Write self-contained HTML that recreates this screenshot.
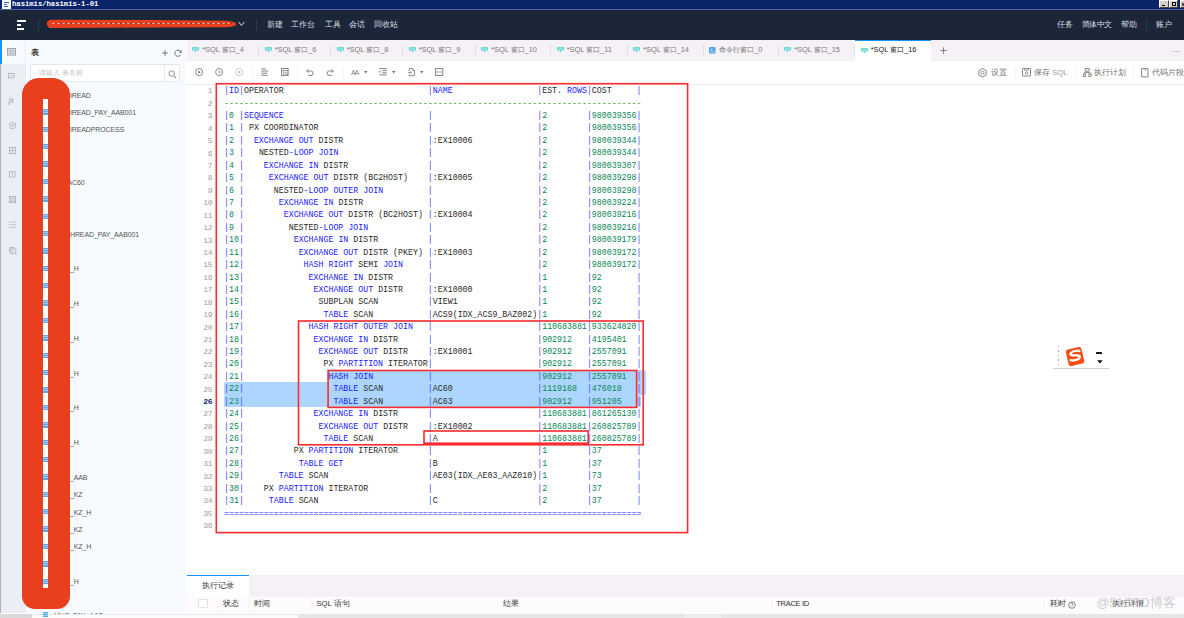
<!DOCTYPE html>
<html lang="zh">
<head>
<meta charset="utf-8">
<title>hasimis/hasimis-1-01</title>
<style>
*{box-sizing:border-box;margin:0;padding:0}
html,body{width:1184px;height:618px;overflow:hidden;background:#fff}
body{position:relative;font-family:"Liberation Sans",sans-serif;font-size:8px;color:#555;-webkit-font-smoothing:antialiased}
.abs{position:absolute}
/* title bar */
#tb{left:0;top:0;width:1184px;height:10px;background:#0a246a;border-bottom:1px solid #50649a}
#tb .t{left:12px;top:-1px;font:bold 7.2px/10px "Liberation Mono",monospace;color:#fff;letter-spacing:0;white-space:pre}
#tb .ic{left:2px;top:0;width:9px;height:9px;background:#fff}
.wb{top:0;width:9.4px;height:7.8px;background:#d4d0c8;border:1px solid;border-color:#fff #404040 #404040 #fff}
/* header */
#hd{left:0;top:10px;width:1184px;height:29.6px;background:#1b2738}
#hd .m{top:9.6px;font-size:7.8px;line-height:10px;color:#d9dde3;white-space:nowrap}
#hd .sep{top:9px;width:1px;height:12px;background:#2f3b4b}
/* left strip */
#ls{left:0;top:40px;width:25.7px;height:573px;background:#eceef6;border-left:1.4px solid #b2b2b6}
#ls .cursel{left:-1.4px;top:0;width:25.7px;height:24px;background:#f7faff;border-left:2px solid #1890ff}
/* left panel */
#lp{left:25.7px;top:40px;width:160.9px;height:573px;background:#f7faff}
.tt{position:absolute;left:70px;font-size:7px;line-height:12px;color:#555;white-space:nowrap;letter-spacing:-0.12px}
.ti{position:absolute;left:43.2px;width:5.3px;height:5.4px;background:repeating-linear-gradient(180deg,#5aa9f3 0 1.2px,#9dcdf9 1.2px 1.8px);z-index:6}
/* tabs */
#tabs{left:186.6px;top:40px;width:997.4px;height:21px;background:#f5f1f6}
.tab{top:0;height:21px;font-size:7.4px;line-height:21px;color:#7a7a7a;white-space:nowrap}
.tab .x{position:absolute;left:15.6px;top:-0.6px}
.tab .i{position:absolute;left:5.6px;top:7.4px;width:7px;height:5.5px}
.tab .s{position:absolute;right:0;top:5px;width:1px;height:11px;background:#e2dfe6}
.tab.act{background:#fff;color:#222;border-top:1.5px solid #1890ff}
/* toolbar */
#tool{left:186px;top:61px;width:998px;height:23.5px;background:#fff;border-bottom:1px solid #ececec}
.tsep{top:6px;width:1px;height:11px;background:#f3f3f3}
.rt{top:6.5px;font-size:7.6px;line-height:10px;color:#747474;white-space:nowrap}
/* editor */
#ed{left:186px;top:84.5px;width:998px;height:490.5px;background:#fff}
.ln{position:absolute;left:186px;width:26.1px;height:12.42px;text-align:right;font:8px/12.42px "Liberation Mono",monospace;letter-spacing:-0.35px;color:#9c9c9c}
.ln.cur{color:#0b216f;font-weight:bold}
.cl{position:absolute;left:224.1px;height:12.42px;font:8.282px/12.42px "Liberation Mono",monospace;color:#2a2a2a;white-space:pre;z-index:3}
.cl span{position:absolute;top:0}
.cl .k{color:#1a1aff}
.cl .p{color:#4646ff}
.cl .n{color:#098658}
.cl .c{color:#2e9a2e}
.sel{position:absolute;background:#add6ff;z-index:2;border-radius:1.5px}
.rb{position:absolute;border:2.1px solid #fb262b;z-index:5}
/* bottom */
#bt{left:186.6px;top:574.5px;width:998px;height:22px;background:#f5f1f6}
#bt .t{left:0;top:0;width:62.5px;height:22px;background:#fff;border-top:1.3px solid #1890ff;font-size:7.7px;line-height:19px;color:#444;text-align:center}
#bh{left:186px;top:596.5px;width:998px;height:17px;background:#fdfbfd}
#bh .h{top:2.4px;font-size:7.6px;line-height:10px;color:#333;white-space:nowrap}
#bh .cs{top:0;width:1px;height:17px;background:#f7f5f8}
#sb{left:0;top:613.5px;width:1184px;height:4.5px;background:#e6e5e8}
svg{position:absolute;overflow:visible}
</style>
</head>
<body>
<!-- ===== window title bar ===== -->
<div id="tb" class="abs">
  <div class="ic abs"><div class="abs" style="left:2px;top:1.5px;width:5px;height:1.2px;background:#2b6fd6"></div><div class="abs" style="left:1.5px;top:4px;width:3px;height:1.2px;background:#2b6fd6"></div><div class="abs" style="left:1.5px;top:6.2px;width:4px;height:1.2px;background:#35507a"></div></div>
  <div class="t abs"><span style="position:absolute;left:0.00px;top:0">hasi</span><span style="position:absolute;left:17.28px;top:0">mis/</span><span style="position:absolute;left:34.56px;top:0">hasi</span><span style="position:absolute;left:51.84px;top:0">mis-</span><span style="position:absolute;left:69.12px;top:0">1-01</span></div>
  <div class="wb abs" style="left:1159.2px"><div class="abs" style="left:1.5px;top:3.5px;width:3px;height:1.2px;background:#000"></div></div>
  <div class="wb abs" style="left:1169px"><div class="abs" style="left:1.5px;top:1px;width:4px;height:3.5px;border:1px solid #000;border-top-width:1.5px"></div></div>
  <div class="wb abs" style="left:1179.6px"><div class="abs" style="left:1px;top:0px;font:bold 6px/6px 'Liberation Sans',sans-serif;color:#000">x</div></div>
</div>

<!-- ===== dark app header ===== -->
<div id="hd" class="abs">
  <div class="abs" style="left:16.5px;top:10px;width:9.5px;height:2.4px;background:#fff"></div>
  <div class="abs" style="left:16.5px;top:14px;width:4.8px;height:2.2px;background:#fff"></div>
  <div class="abs" style="left:16.5px;top:17.6px;width:7.3px;height:2.4px;background:#fff"></div>
  <div class="sep abs" style="left:37.5px"></div>
  <div class="abs" style="left:49px;top:17px;width:7px;height:1px;background:#8d96a3"></div>
  <div class="sep abs" style="left:127px;top:12px;height:8px;opacity:.6"></div>
  <!-- red scribble over the connection name -->
  <svg style="left:0;top:-10px" width="260" height="40" viewBox="0 0 260 40"><path d="M46.8 23.8C46.8 21 49 19.7 52 19.7L150 20.1L226 20.7C232 20.9 236 22.6 236.6 24C236 25.7 232 27.1 226 27.2L150 27.6L52 27.9C49 27.9 46.8 26.6 46.8 23.8Z" fill="#e8401f"/></svg>
  <div class="abs" style="left:52px;top:13.3px;width:180px;height:1px;background:repeating-linear-gradient(90deg,#d9c2bd 0 3px,#6b2a1e 3px 5px);opacity:.75"></div>
  <svg style="left:237.6px;top:11.3px" width="7" height="6" viewBox="0 0 7 6"><path d="M0.6 1 L3.5 4.4 L6.4 1" fill="none" stroke="#dfe3e8" stroke-width="1"/></svg>
  <div class="sep abs" style="left:255.9px"></div>
  <div class="m abs" style="left:266.8px">新建</div>
  <div class="m abs" style="left:291.2px">工作台</div>
  <div class="m abs" style="left:324.6px">工具</div>
  <div class="m abs" style="left:349.4px">会话</div>
  <div class="m abs" style="left:373.8px">回收站</div>
  <div class="m abs" style="left:1057px">任务</div>
  <div class="m abs" style="left:1081.5px;letter-spacing:-0.5px">简体中文</div>
  <div class="m abs" style="left:1121px">帮助</div>
  <div class="sep abs" style="left:1146px"></div>
  <div class="m abs" style="left:1156px">账户</div>
</div>

<!-- ===== left icon strip ===== -->
<div id="ls" class="abs">
  <div class="cursel abs"></div>
</div>
<svg style="left:6.9px;top:47.9px" width="9" height="8" viewBox="0 0 9 8"><rect x=".5" y=".5" width="8" height="6.6" fill="none" stroke="#9a9ea6" stroke-width=".9"/><path d="M.5 2.15H8.5M.5 3.8H8.5M.5 5.45H8.5M3.2 .5V7.1M5.8 .5V7.1" stroke="#9a9ea6" stroke-width=".6"/></svg>
<svg style="left:8.46px;top:72.68px" width="6.89" height="6.13" viewBox="0 0 9 8"><rect x=".5" y=".8" width="7.5" height="5.6" fill="none" stroke="#a3a7af" stroke-width=".9"/><path d="M2.2 5 L4 3.4 L5.3 4.4 L7 2.6" fill="none" stroke="#a3a7af" stroke-width=".8"/></svg>
<div class="abs" style="left:8.5px;top:96px;font:italic 7.5px/10px 'Liberation Serif',serif;color:#8a8f99">fx</div>
<svg style="left:8.52px;top:122.42px" width="7.56" height="7.56" viewBox="0 0 9 9"><ellipse cx="4.3" cy="2" rx="3.4" ry="1.3" fill="none" stroke="#a3a7af" stroke-width=".8"/><path d="M.9 2V6.6C.9 8.2 7.7 8.2 7.7 6.6V2M2.6 5.2H6" fill="none" stroke="#a3a7af" stroke-width=".8"/></svg>
<svg style="left:8.52px;top:147.42px" width="7.56" height="7.56" viewBox="0 0 9 9"><rect x=".6" y=".6" width="7.4" height="7.2" fill="none" stroke="#a3a7af" stroke-width=".9"/><path d="M.6 4.2H8M4.3 .6V7.8" stroke="#a3a7af" stroke-width=".8"/></svg>
<svg style="left:8.94px;top:171.34px" width="6.72" height="6.72" viewBox="0 0 8 8"><rect x=".6" y=".6" width="6.6" height="6.6" fill="none" stroke="#a9adb4" stroke-width=".9"/><path d="M3 2.2H5M4 2.2V5.6" stroke="#a9adb4" stroke-width=".8" fill="none"/></svg>
<svg style="left:8.52px;top:196.42px" width="7.56" height="7.56" viewBox="0 0 9 9"><rect x=".6" y=".6" width="7.4" height="7.4" fill="none" stroke="#a3a7af" stroke-width=".9"/><path d="M.6 .6L8 8M8 .6L.6 8" stroke="#a3a7af" stroke-width=".7"/><rect x="2.6" y="2.6" width="3.4" height="3.4" fill="#eceef6" stroke="#a3a7af" stroke-width=".7"/></svg>
<svg style="left:7.60px;top:221.42px" width="8.40" height="7.56" viewBox="0 0 10 9"><path d="M2.8 1.2H9.5M2.8 4.4H9.5M2.8 7.6H9.5" stroke="#aeb2b9" stroke-width=".9"/><path d="M.3 1.2H1.5M.3 4.4H1.5M.3 7.6H1.5" stroke="#aeb2b9" stroke-width="1"/></svg>
<svg style="left:8.52px;top:246.92px" width="7.56" height="7.56" viewBox="0 0 9 9"><rect x="2.2" y="2.2" width="6" height="5.8" fill="none" stroke="#a3a7af" stroke-width=".9"/><path d="M.6 6V.6H6.2" fill="none" stroke="#a3a7af" stroke-width=".9"/><path d="M4.3 4L6 5.1L4.3 6.2Z" fill="#a3a7af"/></svg>

<!-- ===== left object panel ===== -->
<div id="lp" class="abs"></div>
<div class="abs" style="left:31px;top:46.5px;font-size:8px;line-height:11px;font-weight:bold;color:#333">表</div>
<svg style="left:162.3px;top:49.5px" width="6" height="6" viewBox="0 0 6 6"><path d="M3 .2V5.8M.2 3H5.8" stroke="#666" stroke-width=".85"/></svg>
<svg style="left:174px;top:48.7px" width="8" height="8" viewBox="0 0 8 8"><path d="M6.9 3.3A3.1 3.1 0 1 0 6.7 5.6" fill="none" stroke="#666" stroke-width=".9"/><path d="M7.3 1.2V3.4H5.2" fill="none" stroke="#666" stroke-width=".8"/></svg>
<div class="abs" style="left:30.2px;top:64.2px;width:150.3px;height:18.3px;background:#fff;border:1px solid #e4e6ea;border-radius:1.5px"></div>
<div class="abs" style="left:163.5px;top:65px;width:1px;height:17px;background:#e9ebee"></div>
<div class="abs" style="left:38.8px;top:68.4px;font-size:7.1px;line-height:10px;color:#c3c5c9;white-space:nowrap">请输入 表名称</div>
<svg style="left:168px;top:69.5px" width="9" height="9" viewBox="0 0 9 9"><circle cx="3.6" cy="3.6" r="2.7" fill="none" stroke="#8c8c8c" stroke-width=".95"/><path d="M5.6 5.6L8.2 8.2" stroke="#8c8c8c" stroke-width="1.05"/></svg>
<div class="tt" style="top:89.60px;left:70.0px">IREAD</div>
<div class="ti" style="top:109.28px"></div><div class="tt" style="top:106.98px;left:70.0px">IREAD_PAY_AAB001</div>
<div class="ti" style="top:126.66px"></div><div class="tt" style="top:124.36px;left:70.0px">IREADPROCESS</div>
<div class="ti" style="top:144.04px"></div>
<div class="ti" style="top:161.42px"></div><div class="tt" style="top:159.12px;left:64.8px">A</div>
<div class="ti" style="top:178.80px"></div><div class="tt" style="top:176.50px;left:67.6px">AC60</div>
<div class="ti" style="top:196.18px"></div><div class="tt" style="top:193.88px;left:64.8px">F</div>
<div class="ti" style="top:213.56px"></div><div class="tt" style="top:211.26px;left:64.8px">H</div>
<div class="ti" style="top:230.94px"></div><div class="tt" style="top:228.64px;left:70.0px">HREAD_PAY_AAB001</div>
<div class="ti" style="top:248.32px"></div><div class="tt" style="top:246.02px;left:64.8px">I</div>
<div class="ti" style="top:265.70px"></div><div class="tt" style="top:263.40px;left:70.0px">_H</div>
<div class="ti" style="top:283.08px"></div>
<div class="ti" style="top:300.46px"></div><div class="tt" style="top:298.16px;left:70.0px">_H</div>
<div class="ti" style="top:317.84px"></div><div class="tt" style="top:315.54px;left:64.8px">I</div>
<div class="ti" style="top:335.22px"></div><div class="tt" style="top:332.92px;left:70.0px">_H</div>
<div class="ti" style="top:352.60px"></div><div class="tt" style="top:350.30px;left:64.8px">I</div>
<div class="ti" style="top:369.98px"></div><div class="tt" style="top:367.68px;left:70.0px">_H</div>
<div class="ti" style="top:387.36px"></div><div class="tt" style="top:385.06px;left:64.8px">I</div>
<div class="ti" style="top:404.74px"></div><div class="tt" style="top:402.44px;left:70.0px">_H</div>
<div class="ti" style="top:422.12px"></div><div class="tt" style="top:419.82px;left:64.8px">I</div>
<div class="ti" style="top:439.50px"></div><div class="tt" style="top:437.20px;left:70.0px">_H</div>
<div class="ti" style="top:456.88px"></div>
<div class="ti" style="top:474.26px"></div><div class="tt" style="top:471.96px;left:70.0px">_AAB</div>
<div class="ti" style="top:491.64px"></div><div class="tt" style="top:489.34px;left:70.0px">_KZ</div>
<div class="ti" style="top:509.02px"></div><div class="tt" style="top:506.72px;left:70.0px">_KZ_H</div>
<div class="ti" style="top:526.40px"></div><div class="tt" style="top:524.10px;left:70.0px">_KZ</div>
<div class="ti" style="top:543.78px"></div><div class="tt" style="top:541.48px;left:70.0px">_KZ_H</div>
<div class="ti" style="top:561.16px"></div><div class="tt" style="top:558.86px;left:64.8px">I</div>
<div class="ti" style="top:578.54px"></div><div class="tt" style="top:576.24px;left:70.0px">_H</div>

<div class="ti" style="top:612px"></div><div class="tt" style="top:609.7px;left:54px">MHS_PAY_AAB</div>

<!-- big red redaction blob -->
<div class="abs" style="left:21.6px;top:77.6px;width:48px;height:531px;border-radius:17px 18px 13px 13px/17px 16px 13px 13px;background:#e8401f;z-index:5"></div>
<div class="abs" style="left:43px;top:99px;width:5.2px;height:488.5px;background:#fff;z-index:5"></div>

<!-- ===== tab bar ===== -->
<div id="tabs" class="abs">
  <div class="tab abs" style="left:0.0px;width:72.5px"><svg class="i" viewBox="0 0 7 5.5"><rect x="0" y="0" width="7" height="3.6" rx=".5" fill="#63d8d2"/><path d="M1.2 1.2H5.8M1.2 2.4H5.8" stroke="#c9f3f0" stroke-width=".5"/><path d="M2.4 3.6H4.6L4 5.3H3Z" fill="#63d8d2"/></svg><span class="x">*SQL 窗口_4</span><div class="s"></div></div>
  <div class="tab abs" style="left:72.5px;width:72.0px"><svg class="i" viewBox="0 0 7 5.5"><rect x="0" y="0" width="7" height="3.6" rx=".5" fill="#63d8d2"/><path d="M1.2 1.2H5.8M1.2 2.4H5.8" stroke="#c9f3f0" stroke-width=".5"/><path d="M2.4 3.6H4.6L4 5.3H3Z" fill="#63d8d2"/></svg><span class="x">*SQL 窗口_6</span><div class="s"></div></div>
  <div class="tab abs" style="left:144.5px;width:72.0px"><svg class="i" viewBox="0 0 7 5.5"><rect x="0" y="0" width="7" height="3.6" rx=".5" fill="#63d8d2"/><path d="M1.2 1.2H5.8M1.2 2.4H5.8" stroke="#c9f3f0" stroke-width=".5"/><path d="M2.4 3.6H4.6L4 5.3H3Z" fill="#63d8d2"/></svg><span class="x">*SQL 窗口_8</span><div class="s"></div></div>
  <div class="tab abs" style="left:216.5px;width:72.5px"><svg class="i" viewBox="0 0 7 5.5"><rect x="0" y="0" width="7" height="3.6" rx=".5" fill="#63d8d2"/><path d="M1.2 1.2H5.8M1.2 2.4H5.8" stroke="#c9f3f0" stroke-width=".5"/><path d="M2.4 3.6H4.6L4 5.3H3Z" fill="#63d8d2"/></svg><span class="x">*SQL 窗口_9</span><div class="s"></div></div>
  <div class="tab abs" style="left:289.0px;width:75.5px"><svg class="i" viewBox="0 0 7 5.5"><rect x="0" y="0" width="7" height="3.6" rx=".5" fill="#63d8d2"/><path d="M1.2 1.2H5.8M1.2 2.4H5.8" stroke="#c9f3f0" stroke-width=".5"/><path d="M2.4 3.6H4.6L4 5.3H3Z" fill="#63d8d2"/></svg><span class="x">*SQL 窗口_10</span><div class="s"></div></div>
  <div class="tab abs" style="left:364.5px;width:76.5px"><svg class="i" viewBox="0 0 7 5.5"><rect x="0" y="0" width="7" height="3.6" rx=".5" fill="#63d8d2"/><path d="M1.2 1.2H5.8M1.2 2.4H5.8" stroke="#c9f3f0" stroke-width=".5"/><path d="M2.4 3.6H4.6L4 5.3H3Z" fill="#63d8d2"/></svg><span class="x">*SQL 窗口_11</span><div class="s"></div></div>
  <div class="tab abs" style="left:441.0px;width:76.0px"><svg class="i" viewBox="0 0 7 5.5"><rect x="0" y="0" width="7" height="3.6" rx=".5" fill="#63d8d2"/><path d="M1.2 1.2H5.8M1.2 2.4H5.8" stroke="#c9f3f0" stroke-width=".5"/><path d="M2.4 3.6H4.6L4 5.3H3Z" fill="#63d8d2"/></svg><span class="x">*SQL 窗口_14</span><div class="s"></div></div>
  <div class="tab abs" style="left:517.0px;width:75.0px"><svg class="i" style="width:6.5px;height:6.5px;top:7px" viewBox="0 0 6.5 6.5"><rect x="0" y="0" width="6.5" height="6.5" rx=".8" fill="#5aa5f2"/><path d="M1.6 1.8L3.2 3.2L1.6 4.6M3.6 4.8H5" fill="none" stroke="#fff" stroke-width=".7"/></svg><span class="x">命令行窗口_0</span><div class="s"></div></div>
  <div class="tab abs" style="left:592.0px;width:76.5px"><svg class="i" viewBox="0 0 7 5.5"><rect x="0" y="0" width="7" height="3.6" rx=".5" fill="#63d8d2"/><path d="M1.2 1.2H5.8M1.2 2.4H5.8" stroke="#c9f3f0" stroke-width=".5"/><path d="M2.4 3.6H4.6L4 5.3H3Z" fill="#63d8d2"/></svg><span class="x">*SQL 窗口_15</span><div class="s"></div></div>
  <div class="tab abs act" style="left:668.5px;width:76.0px"><svg class="i" viewBox="0 0 7 5.5"><rect x="0" y="0" width="7" height="3.6" rx=".5" fill="#63d8d2"/><path d="M1.2 1.2H5.8M1.2 2.4H5.8" stroke="#c9f3f0" stroke-width=".5"/><path d="M2.4 3.6H4.6L4 5.3H3Z" fill="#63d8d2"/></svg><span class="x" style="top:-2.1px">*SQL 窗口_16</span></div>

  <svg style="left:753px;top:6.7px" width="7" height="7" viewBox="0 0 7 7"><path d="M3.5 .3V6.7M.3 3.5H6.7" stroke="#666" stroke-width=".8"/></svg>
  <div class="abs" style="left:986.4px;top:10.8px;width:1.3px;height:1.3px;background:#999;box-shadow:2.6px 0 #999,5.2px 0 #999"></div>
</div>

<!-- ===== editor toolbar ===== -->
<div id="tool" class="abs">
  <!-- run -->
  <svg style="left:9.36px;top:6.96px" width="8.28" height="8.28" viewBox="0 0 9 9"><circle cx="4.5" cy="4.5" r="3.9" fill="none" stroke="#707070" stroke-width=".9"/><path d="M3.5 2.8L6.3 4.5L3.5 6.2Z" fill="#707070"/></svg>
  <svg style="left:28.86px;top:6.96px" width="8.28" height="8.28" viewBox="0 0 9 9"><circle cx="4.5" cy="4.5" r="3.9" fill="none" stroke="#7a7a7a" stroke-width=".9"/><path d="M3.7 2.9L6.1 4.5L3.7 6.1" fill="none" stroke="#7a7a7a" stroke-width=".8"/></svg>
  <svg style="left:48.86px;top:6.96px" width="8.28" height="8.28" viewBox="0 0 9 9"><circle cx="4.5" cy="4.5" r="3.9" fill="none" stroke="#c4c4c4" stroke-width=".9"/><rect x="3.3" y="3.3" width="2.4" height="2.4" fill="#c4c4c4"/></svg>
  <div class="tsep abs" style="left:65.5px"></div>
  <svg style="left:74.86px;top:7.06px" width="8.28" height="8.28" viewBox="0 0 9 9"><path d="M.3 1H5.6M.3 3.3H8M.3 5.6H6.6M.3 7.9H7.6" stroke="#7a7a7a" stroke-width="1"/></svg>
  <svg style="left:94.86px;top:7.06px" width="8.28" height="8.28" viewBox="0 0 9 9"><rect x=".5" y=".5" width="7.2" height="7.6" fill="none" stroke="#7a7a7a" stroke-width=".95"/><path d="M.5 2.8H7.7M2.9 2.8V8" stroke="#7a7a7a" stroke-width=".8"/><circle cx="5.6" cy="5.8" r="1.3" fill="#fff" stroke="#7a7a7a" stroke-width=".7"/><path d="M6.6 6.8L7.8 8" stroke="#7a7a7a" stroke-width=".8"/></svg>
  <div class="tsep abs" style="left:111px"></div>
  <svg style="left:119.86px;top:7.72px" width="8.28" height="7.36" viewBox="0 0 9 8"><path d="M2.6 .4L.8 2.2L2.6 4M.8 2.2H5.3A2.4 2.4 0 0 1 5.3 7H2.2" fill="none" stroke="#707070" stroke-width=".95"/></svg>
  <svg style="left:139.86px;top:7.72px" width="8.28" height="7.36" viewBox="0 0 9 8"><path d="M6.2 .4L8 2.2L6.2 4M8 2.2H3.6A2.4 2.4 0 0 0 3.6 7H6.6" fill="none" stroke="#707070" stroke-width=".95"/></svg>
  <div class="tsep abs" style="left:156.5px"></div>
  <div class="abs" style="left:165px;top:6.6px;font-size:7px;line-height:10px;color:#808080;letter-spacing:-1.1px">AA</div>
  <svg style="left:177.50px;top:9.90px" width="3.4" height="2.4" viewBox="0 0 3.4 2.4"><path d="M0 0H3.4L1.7 2.4Z" fill="#707070"/></svg>
  <svg style="left:192.86px;top:7.22px" width="8.28" height="7.36" viewBox="0 0 9 8"><path d="M.3 .6H8.5M3.4 2.9H8.5M3.4 5.2H8.5M.3 7.5H8.5" stroke="#7a7a7a" stroke-width="1"/><path d="M.3 2.7L2.1 4.05L.3 5.4Z" fill="#7a7a7a"/></svg>
  <svg style="left:205.50px;top:9.90px" width="3.4" height="2.4" viewBox="0 0 3.4 2.4"><path d="M0 0H3.4L1.7 2.4Z" fill="#707070"/></svg>
  <svg style="left:221.82px;top:6.76px" width="7.36" height="8.28" viewBox="0 0 8 9"><path d="M1.2 3.4V.6H5L7.2 2.8V8.4H1.2V6.6" fill="none" stroke="#7a7a7a" stroke-width=".9"/><path d="M4.8 .6V3H7.2" fill="none" stroke="#7a7a7a" stroke-width=".7"/><path d="M0 5H3.8M2.6 3.8L3.8 5L2.6 6.2" fill="none" stroke="#7a7a7a" stroke-width=".8"/></svg>
  <svg style="left:233.50px;top:9.90px" width="3.4" height="2.4" viewBox="0 0 3.4 2.4"><path d="M0 0H3.4L1.7 2.4Z" fill="#707070"/></svg>
  <svg style="left:249.36px;top:6.96px" width="8.28" height="8.28" viewBox="0 0 9 9"><rect x=".5" y=".5" width="8" height="7.6" fill="none" stroke="#7a7a7a" stroke-width=".95"/><path d="M2.4 3V5.8M3.8 4.4H5.4M6.6 3V5.8" stroke="#7a7a7a" stroke-width=".8"/></svg>
  <!-- right actions -->
  <svg style="left:792px;top:7px" width="9" height="9.5" viewBox="0 0 9 9.5"><path d="M4.5 .5L8.1 2.6V6.9L4.5 9L.9 6.9V2.6Z" fill="none" stroke="#777" stroke-width=".9"/><circle cx="4.5" cy="4.75" r="1.5" fill="none" stroke="#777" stroke-width=".8"/></svg>
  <div class="rt abs" style="left:804.5px">设置</div>
  <div class="tsep abs" style="left:828.5px"></div>
  <svg style="left:836px;top:7.3px" width="9" height="8.5" viewBox="0 0 9 8.5"><rect x=".5" y=".5" width="8" height="7.5" rx=".6" fill="none" stroke="#777" stroke-width=".9"/><path d="M2.6 .5V2.4H6.2V.5" fill="none" stroke="#777" stroke-width=".7"/><circle cx="4.5" cy="5.1" r="1.2" fill="none" stroke="#777" stroke-width=".7"/></svg>
  <div class="rt abs" style="left:848.2px">保存 <span style="color:#9a9a9a">SQL</span></div>
  <div class="tsep abs" style="left:888.5px"></div>
  <svg style="left:897px;top:7.3px" width="8.5" height="9" viewBox="0 0 8.5 9"><rect x="2.2" y=".5" width="4" height="2.6" fill="none" stroke="#777" stroke-width=".8"/><path d="M4.2 3.1V4.6M1.4 6V4.6H7V6" fill="none" stroke="#777" stroke-width=".8"/><rect x=".3" y="6" width="2.4" height="2.4" fill="none" stroke="#777" stroke-width=".8"/><rect x="5.8" y="6" width="2.4" height="2.4" fill="none" stroke="#777" stroke-width=".8"/></svg>
  <div class="rt abs" style="left:907.7px">执行计划</div>
  <div class="tsep abs" style="left:946.5px"></div>
  <svg style="left:955px;top:7px" width="8" height="9.5" viewBox="0 0 8 9.5"><path d="M.6 .6H7V8.9H.6Z" fill="none" stroke="#777" stroke-width=".9"/><path d="M4.4 .6V2.8" stroke="#777" stroke-width=".8"/></svg>
  <div class="rt abs" style="left:966.2px">代码片段</div>

</div>

<!-- ===== editor ===== -->
<div id="ed" class="abs"></div>
<div class="sel" style="left:328.2px;top:369.9px;width:317.4px;height:13px"></div>
<div class="sel" style="left:224.3px;top:382.3px;width:421.3px;height:13px"></div>
<div class="sel" style="left:224.3px;top:394.7px;width:416.4px;height:12.5px"></div>
<div class="ln" style="top:85.45px">1</div><div class="cl" style="top:85.15px"><span class="p" style="left:0.00px">|</span><span class="k" style="left:4.97px">ID</span><span class="p" style="left:14.91px">|</span><span style="left:19.88px">OPERATOR</span><span class="p" style="left:203.77px">|</span><span class="k" style="left:208.74px">NAME</span><span class="p" style="left:313.11px">|</span><span style="left:318.08px">EST</span><span style="left:332.99px">.</span><span class="k" style="left:342.93px">ROWS</span><span class="p" style="left:362.81px">|</span><span style="left:367.78px">COST</span><span class="p" style="left:412.51px">|</span></div>
<div class="ln" style="top:97.87px">2</div><div class="cl" style="top:97.57px"><span class="c" style="left:0.00px">------------</span><span class="c" style="left:59.64px">------------</span><span class="c" style="left:119.28px">------------</span><span class="c" style="left:178.92px">------------</span><span class="c" style="left:238.56px">------------</span><span class="c" style="left:298.20px">------------</span><span class="c" style="left:357.84px">------------</span></div>
<div class="ln" style="top:110.30px">3</div><div class="cl" style="top:110.00px"><span class="p" style="left:0.00px">|</span><span class="n" style="left:4.97px">0</span><span class="p" style="left:14.91px">|</span><span class="k" style="left:19.88px">SEQUENCE</span><span class="p" style="left:203.77px">|</span><span class="p" style="left:313.11px">|</span><span class="n" style="left:318.08px">2</span><span class="p" style="left:362.81px">|</span><span class="n" style="left:367.78px">980039356</span><span class="p" style="left:412.51px">|</span></div>
<div class="ln" style="top:122.72px">4</div><div class="cl" style="top:122.42px"><span class="p" style="left:0.00px">|</span><span class="n" style="left:4.97px">1</span><span class="p" style="left:14.91px">|</span><span style="left:24.85px">PX</span><span style="left:39.76px">COORDINATOR</span><span class="p" style="left:203.77px">|</span><span class="p" style="left:313.11px">|</span><span class="n" style="left:318.08px">2</span><span class="p" style="left:362.81px">|</span><span class="n" style="left:367.78px">980039356</span><span class="p" style="left:412.51px">|</span></div>
<div class="ln" style="top:135.15px">5</div><div class="cl" style="top:134.85px"><span class="p" style="left:0.00px">|</span><span class="n" style="left:4.97px">2</span><span class="p" style="left:14.91px">|</span><span class="k" style="left:29.82px">EXCHANGE</span><span class="k" style="left:74.55px">OUT</span><span style="left:94.43px">DISTR</span><span class="p" style="left:203.77px">|</span><span style="left:208.74px">:</span><span style="left:213.71px">EX10006</span><span class="p" style="left:313.11px">|</span><span class="n" style="left:318.08px">2</span><span class="p" style="left:362.81px">|</span><span class="n" style="left:367.78px">980039344</span><span class="p" style="left:412.51px">|</span></div>
<div class="ln" style="top:147.57px">6</div><div class="cl" style="top:147.27px"><span class="p" style="left:0.00px">|</span><span class="n" style="left:4.97px">3</span><span class="p" style="left:14.91px">|</span><span style="left:34.79px">NESTED</span><span class="k" style="left:64.61px">-</span><span class="k" style="left:69.58px">LOOP</span><span class="k" style="left:94.43px">JOIN</span><span class="p" style="left:203.77px">|</span><span class="p" style="left:313.11px">|</span><span class="n" style="left:318.08px">2</span><span class="p" style="left:362.81px">|</span><span class="n" style="left:367.78px">980039344</span><span class="p" style="left:412.51px">|</span></div>
<div class="ln" style="top:159.99px">7</div><div class="cl" style="top:159.69px"><span class="p" style="left:0.00px">|</span><span class="n" style="left:4.97px">4</span><span class="p" style="left:14.91px">|</span><span class="k" style="left:39.76px">EXCHANGE</span><span class="k" style="left:84.49px">IN</span><span style="left:99.40px">DISTR</span><span class="p" style="left:203.77px">|</span><span class="p" style="left:313.11px">|</span><span class="n" style="left:318.08px">2</span><span class="p" style="left:362.81px">|</span><span class="n" style="left:367.78px">980039307</span><span class="p" style="left:412.51px">|</span></div>
<div class="ln" style="top:172.42px">8</div><div class="cl" style="top:172.12px"><span class="p" style="left:0.00px">|</span><span class="n" style="left:4.97px">5</span><span class="p" style="left:14.91px">|</span><span class="k" style="left:44.73px">EXCHANGE</span><span class="k" style="left:89.46px">OUT</span><span style="left:109.34px">DISTR</span><span style="left:139.16px">(</span><span style="left:144.13px">BC2HOST</span><span style="left:178.92px">)</span><span class="p" style="left:203.77px">|</span><span style="left:208.74px">:</span><span style="left:213.71px">EX10005</span><span class="p" style="left:313.11px">|</span><span class="n" style="left:318.08px">2</span><span class="p" style="left:362.81px">|</span><span class="n" style="left:367.78px">980039298</span><span class="p" style="left:412.51px">|</span></div>
<div class="ln" style="top:184.84px">9</div><div class="cl" style="top:184.54px"><span class="p" style="left:0.00px">|</span><span class="n" style="left:4.97px">6</span><span class="p" style="left:14.91px">|</span><span style="left:49.70px">NESTED</span><span class="k" style="left:79.52px">-</span><span class="k" style="left:84.49px">LOOP</span><span class="k" style="left:109.34px">OUTER</span><span class="k" style="left:139.16px">JOIN</span><span class="p" style="left:203.77px">|</span><span class="p" style="left:313.11px">|</span><span class="n" style="left:318.08px">2</span><span class="p" style="left:362.81px">|</span><span class="n" style="left:367.78px">980039298</span><span class="p" style="left:412.51px">|</span></div>
<div class="ln" style="top:197.27px">10</div><div class="cl" style="top:196.97px"><span class="p" style="left:0.00px">|</span><span class="n" style="left:4.97px">7</span><span class="p" style="left:14.91px">|</span><span class="k" style="left:54.67px">EXCHANGE</span><span class="k" style="left:99.40px">IN</span><span style="left:114.31px">DISTR</span><span class="p" style="left:203.77px">|</span><span class="p" style="left:313.11px">|</span><span class="n" style="left:318.08px">2</span><span class="p" style="left:362.81px">|</span><span class="n" style="left:367.78px">980039224</span><span class="p" style="left:412.51px">|</span></div>
<div class="ln" style="top:209.69px">11</div><div class="cl" style="top:209.39px"><span class="p" style="left:0.00px">|</span><span class="n" style="left:4.97px">8</span><span class="p" style="left:14.91px">|</span><span class="k" style="left:59.64px">EXCHANGE</span><span class="k" style="left:104.37px">OUT</span><span style="left:124.25px">DISTR</span><span style="left:154.07px">(</span><span style="left:159.04px">BC2HOST</span><span style="left:193.83px">)</span><span class="p" style="left:203.77px">|</span><span style="left:208.74px">:</span><span style="left:213.71px">EX10004</span><span class="p" style="left:313.11px">|</span><span class="n" style="left:318.08px">2</span><span class="p" style="left:362.81px">|</span><span class="n" style="left:367.78px">980039216</span><span class="p" style="left:412.51px">|</span></div>
<div class="ln" style="top:222.11px">12</div><div class="cl" style="top:221.81px"><span class="p" style="left:0.00px">|</span><span class="n" style="left:4.97px">9</span><span class="p" style="left:14.91px">|</span><span style="left:64.61px">NESTED</span><span class="k" style="left:94.43px">-</span><span class="k" style="left:99.40px">LOOP</span><span class="k" style="left:124.25px">JOIN</span><span class="p" style="left:203.77px">|</span><span class="p" style="left:313.11px">|</span><span class="n" style="left:318.08px">2</span><span class="p" style="left:362.81px">|</span><span class="n" style="left:367.78px">980039216</span><span class="p" style="left:412.51px">|</span></div>
<div class="ln" style="top:234.54px">13</div><div class="cl" style="top:234.24px"><span class="p" style="left:0.00px">|</span><span class="n" style="left:4.97px">10</span><span class="p" style="left:14.91px">|</span><span class="k" style="left:69.58px">EXCHANGE</span><span class="k" style="left:114.31px">IN</span><span style="left:129.22px">DISTR</span><span class="p" style="left:203.77px">|</span><span class="p" style="left:313.11px">|</span><span class="n" style="left:318.08px">2</span><span class="p" style="left:362.81px">|</span><span class="n" style="left:367.78px">980039179</span><span class="p" style="left:412.51px">|</span></div>
<div class="ln" style="top:246.96px">14</div><div class="cl" style="top:246.66px"><span class="p" style="left:0.00px">|</span><span class="n" style="left:4.97px">11</span><span class="p" style="left:14.91px">|</span><span class="k" style="left:74.55px">EXCHANGE</span><span class="k" style="left:119.28px">OUT</span><span style="left:139.16px">DISTR</span><span style="left:168.98px">(</span><span style="left:173.95px">PKEY</span><span style="left:193.83px">)</span><span class="p" style="left:203.77px">|</span><span style="left:208.74px">:</span><span style="left:213.71px">EX10003</span><span class="p" style="left:313.11px">|</span><span class="n" style="left:318.08px">2</span><span class="p" style="left:362.81px">|</span><span class="n" style="left:367.78px">980039172</span><span class="p" style="left:412.51px">|</span></div>
<div class="ln" style="top:259.39px">15</div><div class="cl" style="top:259.09px"><span class="p" style="left:0.00px">|</span><span class="n" style="left:4.97px">12</span><span class="p" style="left:14.91px">|</span><span class="k" style="left:79.52px">HASH</span><span class="k" style="left:104.37px">RIGHT</span><span style="left:134.19px">SEMI</span><span class="k" style="left:159.04px">JOIN</span><span class="p" style="left:203.77px">|</span><span class="p" style="left:313.11px">|</span><span class="n" style="left:318.08px">2</span><span class="p" style="left:362.81px">|</span><span class="n" style="left:367.78px">980039172</span><span class="p" style="left:412.51px">|</span></div>
<div class="ln" style="top:271.81px">16</div><div class="cl" style="top:271.51px"><span class="p" style="left:0.00px">|</span><span class="n" style="left:4.97px">13</span><span class="p" style="left:14.91px">|</span><span class="k" style="left:84.49px">EXCHANGE</span><span class="k" style="left:129.22px">IN</span><span style="left:144.13px">DISTR</span><span class="p" style="left:203.77px">|</span><span class="p" style="left:313.11px">|</span><span class="n" style="left:318.08px">1</span><span class="p" style="left:362.81px">|</span><span class="n" style="left:367.78px">92</span><span class="p" style="left:412.51px">|</span></div>
<div class="ln" style="top:284.23px">17</div><div class="cl" style="top:283.93px"><span class="p" style="left:0.00px">|</span><span class="n" style="left:4.97px">14</span><span class="p" style="left:14.91px">|</span><span class="k" style="left:89.46px">EXCHANGE</span><span class="k" style="left:134.19px">OUT</span><span style="left:154.07px">DISTR</span><span class="p" style="left:203.77px">|</span><span style="left:208.74px">:</span><span style="left:213.71px">EX10000</span><span class="p" style="left:313.11px">|</span><span class="n" style="left:318.08px">1</span><span class="p" style="left:362.81px">|</span><span class="n" style="left:367.78px">92</span><span class="p" style="left:412.51px">|</span></div>
<div class="ln" style="top:296.66px">18</div><div class="cl" style="top:296.36px"><span class="p" style="left:0.00px">|</span><span class="n" style="left:4.97px">15</span><span class="p" style="left:14.91px">|</span><span style="left:94.43px">SUBPLAN</span><span style="left:134.19px">SCAN</span><span class="p" style="left:203.77px">|</span><span style="left:208.74px">VIEW1</span><span class="p" style="left:313.11px">|</span><span class="n" style="left:318.08px">1</span><span class="p" style="left:362.81px">|</span><span class="n" style="left:367.78px">92</span><span class="p" style="left:412.51px">|</span></div>
<div class="ln" style="top:309.08px">19</div><div class="cl" style="top:308.78px"><span class="p" style="left:0.00px">|</span><span class="n" style="left:4.97px">16</span><span class="p" style="left:14.91px">|</span><span class="k" style="left:99.40px">TABLE</span><span style="left:129.22px">SCAN</span><span class="p" style="left:203.77px">|</span><span style="left:208.74px">ACS9</span><span style="left:228.62px">(</span><span style="left:233.59px">IDX_ACS9_BAZ</span><span style="left:293.23px">002</span><span style="left:308.14px">)</span><span class="p" style="left:313.11px">|</span><span class="n" style="left:318.08px">1</span><span class="p" style="left:362.81px">|</span><span class="n" style="left:367.78px">92</span><span class="p" style="left:412.51px">|</span></div>
<div class="ln" style="top:321.51px">20</div><div class="cl" style="top:321.21px"><span class="p" style="left:0.00px">|</span><span class="n" style="left:4.97px">17</span><span class="p" style="left:14.91px">|</span><span class="k" style="left:84.49px">HASH</span><span class="k" style="left:109.34px">RIGHT</span><span class="k" style="left:139.16px">OUTER</span><span class="k" style="left:168.98px">JOIN</span><span class="p" style="left:203.77px">|</span><span class="p" style="left:313.11px">|</span><span class="n" style="left:318.08px">110683881</span><span class="p" style="left:362.81px">|</span><span class="n" style="left:367.78px">933624820</span><span class="p" style="left:412.51px">|</span></div>
<div class="ln" style="top:333.93px">21</div><div class="cl" style="top:333.63px"><span class="p" style="left:0.00px">|</span><span class="n" style="left:4.97px">18</span><span class="p" style="left:14.91px">|</span><span class="k" style="left:89.46px">EXCHANGE</span><span class="k" style="left:134.19px">IN</span><span style="left:149.10px">DISTR</span><span class="p" style="left:203.77px">|</span><span class="p" style="left:313.11px">|</span><span class="n" style="left:318.08px">902912</span><span class="p" style="left:362.81px">|</span><span class="n" style="left:367.78px">4195401</span><span class="p" style="left:412.51px">|</span></div>
<div class="ln" style="top:346.35px">22</div><div class="cl" style="top:346.05px"><span class="p" style="left:0.00px">|</span><span class="n" style="left:4.97px">19</span><span class="p" style="left:14.91px">|</span><span class="k" style="left:94.43px">EXCHANGE</span><span class="k" style="left:139.16px">OUT</span><span style="left:159.04px">DISTR</span><span class="p" style="left:203.77px">|</span><span style="left:208.74px">:</span><span style="left:213.71px">EX10001</span><span class="p" style="left:313.11px">|</span><span class="n" style="left:318.08px">902912</span><span class="p" style="left:362.81px">|</span><span class="n" style="left:367.78px">2557091</span><span class="p" style="left:412.51px">|</span></div>
<div class="ln" style="top:358.78px">23</div><div class="cl" style="top:358.48px"><span class="p" style="left:0.00px">|</span><span class="n" style="left:4.97px">20</span><span class="p" style="left:14.91px">|</span><span style="left:99.40px">PX</span><span class="k" style="left:114.31px">PARTITION</span><span style="left:164.01px">ITERATOR</span><span class="p" style="left:203.77px">|</span><span class="p" style="left:313.11px">|</span><span class="n" style="left:318.08px">902912</span><span class="p" style="left:362.81px">|</span><span class="n" style="left:367.78px">2557091</span><span class="p" style="left:412.51px">|</span></div>
<div class="ln" style="top:371.20px">24</div><div class="cl" style="top:370.90px"><span class="p" style="left:0.00px">|</span><span class="n" style="left:4.97px">21</span><span class="p" style="left:14.91px">|</span><span class="k" style="left:104.37px">HASH</span><span class="k" style="left:129.22px">JOIN</span><span class="p" style="left:203.77px">|</span><span class="p" style="left:313.11px">|</span><span class="n" style="left:318.08px">902912</span><span class="p" style="left:362.81px">|</span><span class="n" style="left:367.78px">2557091</span><span class="p" style="left:412.51px">|</span></div>
<div class="ln" style="top:383.63px">25</div><div class="cl" style="top:383.33px"><span class="p" style="left:0.00px">|</span><span class="n" style="left:4.97px">22</span><span class="p" style="left:14.91px">|</span><span class="k" style="left:109.34px">TABLE</span><span style="left:139.16px">SCAN</span><span class="p" style="left:203.77px">|</span><span style="left:208.74px">AC60</span><span class="p" style="left:313.11px">|</span><span class="n" style="left:318.08px">1119168</span><span class="p" style="left:362.81px">|</span><span class="n" style="left:367.78px">476018</span><span class="p" style="left:412.51px">|</span></div>
<div class="ln cur" style="top:396.05px">26</div><div class="cl" style="top:395.75px"><span class="p" style="left:0.00px">|</span><span class="n" style="left:4.97px">23</span><span class="p" style="left:14.91px">|</span><span class="k" style="left:109.34px">TABLE</span><span style="left:139.16px">SCAN</span><span class="p" style="left:203.77px">|</span><span style="left:208.74px">AC63</span><span class="p" style="left:313.11px">|</span><span class="n" style="left:318.08px">902912</span><span class="p" style="left:362.81px">|</span><span class="n" style="left:367.78px">951205</span><span class="p" style="left:412.51px">|</span></div>
<div class="ln" style="top:408.47px">27</div><div class="cl" style="top:408.17px"><span class="p" style="left:0.00px">|</span><span class="n" style="left:4.97px">24</span><span class="p" style="left:14.91px">|</span><span class="k" style="left:89.46px">EXCHANGE</span><span class="k" style="left:134.19px">IN</span><span style="left:149.10px">DISTR</span><span class="p" style="left:203.77px">|</span><span class="p" style="left:313.11px">|</span><span class="n" style="left:318.08px">110683881</span><span class="p" style="left:362.81px">|</span><span class="n" style="left:367.78px">861265130</span><span class="p" style="left:412.51px">|</span></div>
<div class="ln" style="top:420.90px">28</div><div class="cl" style="top:420.60px"><span class="p" style="left:0.00px">|</span><span class="n" style="left:4.97px">25</span><span class="p" style="left:14.91px">|</span><span class="k" style="left:94.43px">EXCHANGE</span><span class="k" style="left:139.16px">OUT</span><span style="left:159.04px">DISTR</span><span class="p" style="left:203.77px">|</span><span style="left:208.74px">:</span><span style="left:213.71px">EX10002</span><span class="p" style="left:313.11px">|</span><span class="n" style="left:318.08px">110683881</span><span class="p" style="left:362.81px">|</span><span class="n" style="left:367.78px">260825789</span><span class="p" style="left:412.51px">|</span></div>
<div class="ln" style="top:433.32px">29</div><div class="cl" style="top:433.02px"><span class="p" style="left:0.00px">|</span><span class="n" style="left:4.97px">26</span><span class="p" style="left:14.91px">|</span><span class="k" style="left:99.40px">TABLE</span><span style="left:129.22px">SCAN</span><span class="p" style="left:203.77px">|</span><span style="left:208.74px">A</span><span class="p" style="left:313.11px">|</span><span class="n" style="left:318.08px">110683881</span><span class="p" style="left:362.81px">|</span><span class="n" style="left:367.78px">260825789</span><span class="p" style="left:412.51px">|</span></div>
<div class="ln" style="top:445.75px">30</div><div class="cl" style="top:445.45px"><span class="p" style="left:0.00px">|</span><span class="n" style="left:4.97px">27</span><span class="p" style="left:14.91px">|</span><span style="left:69.58px">PX</span><span class="k" style="left:84.49px">PARTITION</span><span style="left:134.19px">ITERATOR</span><span class="p" style="left:203.77px">|</span><span class="p" style="left:313.11px">|</span><span class="n" style="left:318.08px">1</span><span class="p" style="left:362.81px">|</span><span class="n" style="left:367.78px">37</span><span class="p" style="left:412.51px">|</span></div>
<div class="ln" style="top:458.17px">31</div><div class="cl" style="top:457.87px"><span class="p" style="left:0.00px">|</span><span class="n" style="left:4.97px">28</span><span class="p" style="left:14.91px">|</span><span class="k" style="left:74.55px">TABLE</span><span class="k" style="left:104.37px">GET</span><span class="p" style="left:203.77px">|</span><span style="left:208.74px">B</span><span class="p" style="left:313.11px">|</span><span class="n" style="left:318.08px">1</span><span class="p" style="left:362.81px">|</span><span class="n" style="left:367.78px">37</span><span class="p" style="left:412.51px">|</span></div>
<div class="ln" style="top:470.59px">32</div><div class="cl" style="top:470.29px"><span class="p" style="left:0.00px">|</span><span class="n" style="left:4.97px">29</span><span class="p" style="left:14.91px">|</span><span class="k" style="left:54.67px">TABLE</span><span style="left:84.49px">SCAN</span><span class="p" style="left:203.77px">|</span><span style="left:208.74px">AE03</span><span style="left:228.62px">(</span><span style="left:233.59px">IDX_AE03_AAZ</span><span style="left:293.23px">010</span><span style="left:308.14px">)</span><span class="p" style="left:313.11px">|</span><span class="n" style="left:318.08px">1</span><span class="p" style="left:362.81px">|</span><span class="n" style="left:367.78px">73</span><span class="p" style="left:412.51px">|</span></div>
<div class="ln" style="top:483.02px">33</div><div class="cl" style="top:482.72px"><span class="p" style="left:0.00px">|</span><span class="n" style="left:4.97px">30</span><span class="p" style="left:14.91px">|</span><span style="left:39.76px">PX</span><span class="k" style="left:54.67px">PARTITION</span><span style="left:104.37px">ITERATOR</span><span class="p" style="left:203.77px">|</span><span class="p" style="left:313.11px">|</span><span class="n" style="left:318.08px">2</span><span class="p" style="left:362.81px">|</span><span class="n" style="left:367.78px">37</span><span class="p" style="left:412.51px">|</span></div>
<div class="ln" style="top:495.44px">34</div><div class="cl" style="top:495.14px"><span class="p" style="left:0.00px">|</span><span class="n" style="left:4.97px">31</span><span class="p" style="left:14.91px">|</span><span class="k" style="left:44.73px">TABLE</span><span style="left:74.55px">SCAN</span><span class="p" style="left:203.77px">|</span><span style="left:208.74px">C</span><span class="p" style="left:313.11px">|</span><span class="n" style="left:318.08px">2</span><span class="p" style="left:362.81px">|</span><span class="n" style="left:367.78px">37</span><span class="p" style="left:412.51px">|</span></div>
<div class="ln" style="top:507.87px">35</div><div class="cl" style="top:507.57px"><span class="k" style="left:0.00px">============</span><span class="k" style="left:59.64px">============</span><span class="k" style="left:119.28px">============</span><span class="k" style="left:178.92px">============</span><span class="k" style="left:238.56px">============</span><span class="k" style="left:298.20px">============</span><span class="k" style="left:357.84px">============</span></div>
<div class="ln" style="top:520.29px">36</div><div class="cl" style="top:519.99px"></div>


<svg style="left:0;top:0;z-index:5" width="1184" height="618" viewBox="0 0 1184 618" fill="none" stroke="#fd2a2e" stroke-width="1.6">
<rect x="216.3" y="83.7" width="471.3" height="448.9"/>
<rect x="298.5" y="321" width="344.7" height="123.8"/>
<rect x="328.1" y="370.5" width="308.5" height="36.9"/>
<rect x="424" y="431" width="164.2" height="12.2"/>
</svg>
<!-- sogou IME floating bar -->
<div class="abs" style="left:1053px;top:368.2px;width:56px;height:1px;background:#cfcfcf"></div>
<div class="abs" style="left:1058px;top:345.5px;width:1px;height:21px;background:repeating-linear-gradient(180deg,#aaa 0 1.4px,transparent 1.4px 4.4px)"></div>
<div class="abs" style="left:1067.3px;top:347.6px;width:16.4px;height:16.8px;border-radius:2.6px;background:#ff4a10;transform:rotate(-13deg)"></div>
<svg style="left:1068.4px;top:349.2px;transform:rotate(-13deg)" width="14.6" height="13.6" viewBox="0 0 13 12"><path d="M11 2.6C8.5 1.2 3.2 1.4 2.6 3.6C2 5.9 10.6 5 10.2 7.7C9.8 10.2 4 10.2 1.6 8.8" fill="none" stroke="#fff" stroke-width="2.1" stroke-linecap="round"/></svg>
<div class="abs" style="left:1096.4px;top:351.8px;width:6px;height:2.2px;background:#111;border-radius:.6px"></div>
<svg style="left:1096.5px;top:359.6px" width="5.8" height="3.6" viewBox="0 0 7 4"><path d="M0 0H7L3.5 4Z" fill="#111"/></svg>

<!-- ===== bottom result panel ===== -->
<div id="bt" class="abs"><div class="t abs">执行记录</div></div>
<div id="bh" class="abs">
  <div class="abs" style="left:11.5px;top:2px;width:10px;height:9.6px;background:#fff;border:1px solid #e3e3e6;border-radius:1px"></div>
  <div class="cs abs" style="left:31px"></div>
  <div class="h abs" style="left:36.5px">状态</div>
  <div class="cs abs" style="left:62px"></div>
  <div class="h abs" style="left:68px">时间</div>
  <div class="cs abs" style="left:125px"></div>
  <div class="h abs" style="left:130.5px">SQL 语句</div>
  <div class="cs abs" style="left:312px"></div>
  <div class="h abs" style="left:316.5px">结果</div>
  <div class="cs abs" style="left:585px"></div>
  <div class="h abs" style="left:590.3px;letter-spacing:-0.35px">TRACE ID</div>
  <div class="cs abs" style="left:857px"></div>
  <div class="h abs" style="left:863.5px">耗时</div>
  <svg style="left:881.5px;top:4.3px" width="8" height="8" viewBox="0 0 8 8"><circle cx="4" cy="4" r="3.3" fill="none" stroke="#555" stroke-width=".7"/><path d="M3 3.1C3 1.9 5 1.9 5 3.1C5 3.9 4 3.9 4 4.8M4 5.6V6.2" fill="none" stroke="#555" stroke-width=".7"/></svg>
  <div class="cs abs" style="left:919px"></div>
  <div class="h abs" style="left:926px">执行详情</div>
  <div class="abs" style="left:910.5px;top:-1.6px;font-size:12.6px;line-height:16px;color:#c9c9cc;white-space:nowrap;opacity:.9">@51CTO博客</div>
</div>
<div id="sb" class="abs"><div class="abs" style="left:32px;top:0;width:265.5px;height:4.5px;background:#fcfcfd;border-top:1px solid #e9e9eb"></div><div class="abs" style="left:684px;top:0;width:37px;height:4.5px;background:#edecef"></div><div class="abs" style="left:0;top:0;width:32px;height:4.5px;background:#d9d9db"></div></div>
</body>
</html>
